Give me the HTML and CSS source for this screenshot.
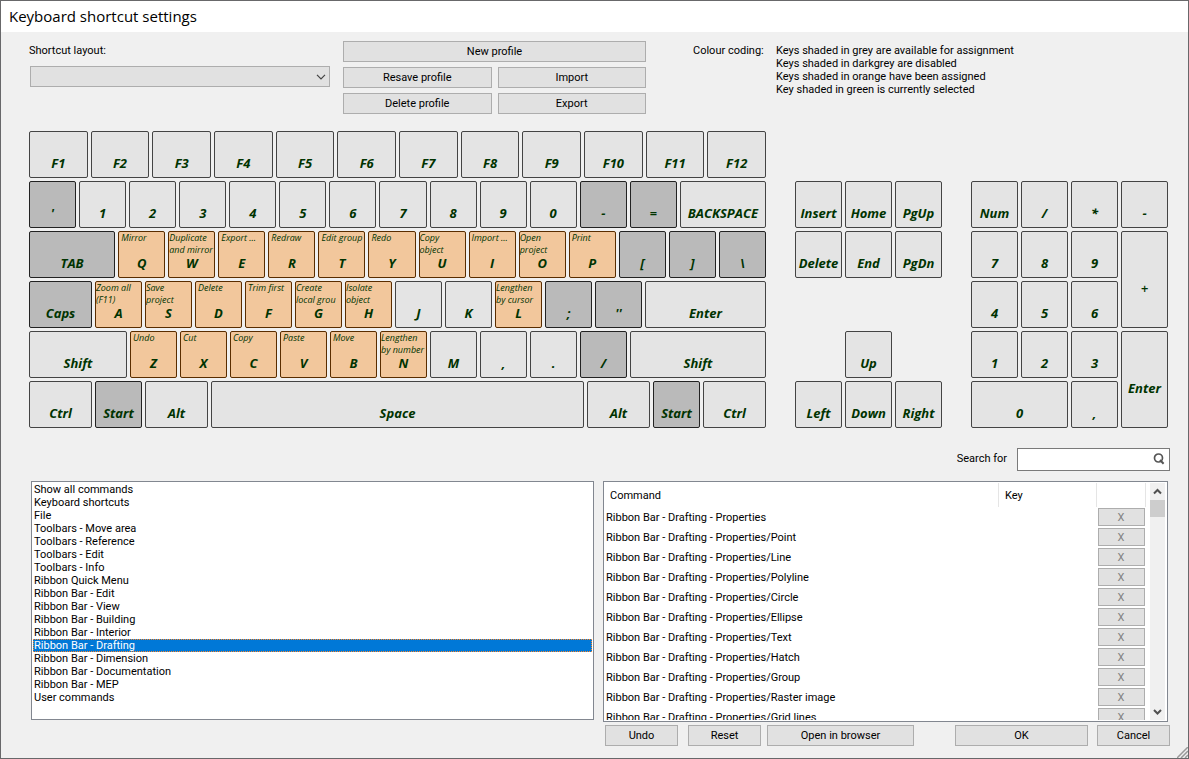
FILE: index.html
```html
<!DOCTYPE html>
<html lang="en">
<head>
  <meta charset="UTF-8">
  <meta name="viewport" content="width=device-width, initial-scale=1.0">
  <title>Keyboard shortcut settings</title>
  <link rel="stylesheet" href="styles.css">
</head>
<body>
  <div class="window">
    <h1 class="title">Keyboard shortcut settings</h1>
    <div class="content">

      <div class="top">
        <div class="layout">
          <label for="layout">Shortcut layout:</label>
          <div class="combo">
            <select id="layout"><option></option></select>
            <svg width="10" height="6" viewBox="0 0 10 6"><path d="M1 .8l4 4 4-4" fill="none" stroke="#444" stroke-width="1.2"/></svg>
          </div>
        </div>
        <div class="profile">
          <button class="btn wide">New profile</button>
          <button class="btn">Resave profile</button>
          <button class="btn">Import</button>
          <button class="btn">Delete profile</button>
          <button class="btn">Export</button>
        </div>
        <div class="legend">
          <span class="legend-title">Colour coding:</span>
          <ul>
            <li>Keys shaded in grey are available for assignment</li>
            <li>Keys shaded in darkgrey are disabled</li>
            <li>Keys shaded in orange have been assigned</li>
            <li>Key shaded in green is currently selected</li>
          </ul>
        </div>
      </div>

      <div class="keyboard">
        <div class="main-keys">
          <div class="row">
            <button class="key">F1</button>
            <button class="key">F2</button>
            <button class="key">F3</button>
            <button class="key">F4</button>
            <button class="key">F5</button>
            <button class="key">F6</button>
            <button class="key">F7</button>
            <button class="key">F8</button>
            <button class="key">F9</button>
            <button class="key">F10</button>
            <button class="key">F11</button>
            <button class="key">F12</button>
          </div>
          <div class="row">
            <button class="key off">'</button>
            <button class="key">1</button>
            <button class="key">2</button>
            <button class="key">3</button>
            <button class="key">4</button>
            <button class="key">5</button>
            <button class="key">6</button>
            <button class="key">7</button>
            <button class="key">8</button>
            <button class="key">9</button>
            <button class="key">0</button>
            <button class="key off">-</button>
            <button class="key off thin">=</button>
            <button class="key w86">BACKSPACE</button>
          </div>
          <div class="row">
            <button class="key off w86">TAB</button>
            <button class="key set"><small>Mirror</small>Q</button>
            <button class="key set"><small class="two">Duplicate<br>and mirror</small>W</button>
            <button class="key set"><small>Export ...</small>E</button>
            <button class="key set"><small>Redraw</small>R</button>
            <button class="key set"><small>Edit group</small>T</button>
            <button class="key set"><small>Redo</small>Y</button>
            <button class="key set"><small class="two">Copy<br>object</small>U</button>
            <button class="key set"><small>Import ...</small>I</button>
            <button class="key set"><small class="two">Open<br>project</small>O</button>
            <button class="key set"><small>Print</small>P</button>
            <button class="key off">[</button>
            <button class="key off">]</button>
            <button class="key off">\</button>
          </div>
          <div class="row">
            <button class="key off w63">Caps</button>
            <button class="key set"><small class="two">Zoom all<br>(F11)</small>A</button>
            <button class="key set"><small class="two">Save<br>project</small>S</button>
            <button class="key set"><small>Delete</small>D</button>
            <button class="key set"><small>Trim first</small>F</button>
            <button class="key set"><small class="two">Create<br>local grou</small>G</button>
            <button class="key set"><small class="two">Isolate<br>object</small>H</button>
            <button class="key">J</button>
            <button class="key">K</button>
            <button class="key set"><small class="two">Lengthen<br>by cursor</small>L</button>
            <button class="key off">;</button>
            <button class="key off">''</button>
            <button class="key w121">Enter</button>
          </div>
          <div class="row">
            <button class="key w98">Shift</button>
            <button class="key set"><small>Undo</small>Z</button>
            <button class="key set"><small>Cut</small>X</button>
            <button class="key set"><small>Copy</small>C</button>
            <button class="key set"><small>Paste</small>V</button>
            <button class="key set"><small>Move</small>B</button>
            <button class="key set"><small class="two">Lengthen<br>by number</small>N</button>
            <button class="key">M</button>
            <button class="key">,</button>
            <button class="key">.</button>
            <button class="key off">/</button>
            <button class="key w136">Shift</button>
          </div>
          <div class="row">
            <button class="key w63">Ctrl</button>
            <button class="key off">Start</button>
            <button class="key w63">Alt</button>
            <button class="key space">Space</button>
            <button class="key w63">Alt</button>
            <button class="key off">Start</button>
            <button class="key w63">Ctrl</button>
          </div>
        </div>

        <div class="nav-keys">
          <button class="key">Insert</button>
          <button class="key">Home</button>
          <button class="key">PgUp</button>
          <button class="key">Delete</button>
          <button class="key">End</button>
          <button class="key">PgDn</button>
          <button class="key up">Up</button>
          <button class="key left">Left</button>
          <button class="key down">Down</button>
          <button class="key right-arrow">Right</button>
        </div>

        <div class="num-keys">
          <button class="key">Num</button>
          <button class="key">/</button>
          <button class="key">*</button>
          <button class="key">-</button>
          <button class="key">7</button>
          <button class="key">8</button>
          <button class="key">9</button>
          <button class="key tall thin">+</button>
          <button class="key">4</button>
          <button class="key">5</button>
          <button class="key">6</button>
          <button class="key">1</button>
          <button class="key">2</button>
          <button class="key">3</button>
          <button class="key tall">Enter</button>
          <button class="key zero">0</button>
          <button class="key">,</button>
        </div>
      </div>

      <div class="search">
        <label for="search">Search for</label>
        <div class="search-box">
          <input id="search" type="text">
          <svg width="12" height="12" viewBox="0 0 12 12"><circle cx="5.5" cy="5" r="4" fill="none" stroke="#555" stroke-width="1.7"/><path d="M7 7l3.6 3.8" stroke="#555" stroke-width="2"/></svg>
        </div>
      </div>

      <div class="bottom">
        <select class="groups" size="18" aria-label="Command groups">
          <option>Show all commands</option>
          <option>Keyboard shortcuts</option>
          <option>File</option>
          <option>Toolbars - Move area</option>
          <option>Toolbars - Reference</option>
          <option>Toolbars - Edit</option>
          <option>Toolbars - Info</option>
          <option>Ribbon Quick Menu</option>
          <option>Ribbon Bar - Edit</option>
          <option>Ribbon Bar - View</option>
          <option>Ribbon Bar - Building</option>
          <option>Ribbon Bar - Interior</option>
          <option selected>Ribbon Bar - Drafting</option>
          <option>Ribbon Bar - Dimension</option>
          <option>Ribbon Bar - Documentation</option>
          <option>Ribbon Bar - MEP</option>
          <option>User commands</option>
        </select>

        <div class="right">
          <div class="commands">
            <div class="table-wrap">
              <table>
                <thead>
                  <tr><th>Command</th><th class="col-key">Key</th><th class="col-del"></th></tr>
                </thead>
                <tbody>
                  <tr><td>Ribbon Bar - Drafting - Properties</td><td></td><td><button class="btn del" disabled>X</button></td></tr>
                  <tr><td>Ribbon Bar - Drafting - Properties/Point</td><td></td><td><button class="btn del" disabled>X</button></td></tr>
                  <tr><td>Ribbon Bar - Drafting - Properties/Line</td><td></td><td><button class="btn del" disabled>X</button></td></tr>
                  <tr><td>Ribbon Bar - Drafting - Properties/Polyline</td><td></td><td><button class="btn del" disabled>X</button></td></tr>
                  <tr><td>Ribbon Bar - Drafting - Properties/Circle</td><td></td><td><button class="btn del" disabled>X</button></td></tr>
                  <tr><td>Ribbon Bar - Drafting - Properties/Ellipse</td><td></td><td><button class="btn del" disabled>X</button></td></tr>
                  <tr><td>Ribbon Bar - Drafting - Properties/Text</td><td></td><td><button class="btn del" disabled>X</button></td></tr>
                  <tr><td>Ribbon Bar - Drafting - Properties/Hatch</td><td></td><td><button class="btn del" disabled>X</button></td></tr>
                  <tr><td>Ribbon Bar - Drafting - Properties/Group</td><td></td><td><button class="btn del" disabled>X</button></td></tr>
                  <tr><td>Ribbon Bar - Drafting - Properties/Raster image</td><td></td><td><button class="btn del" disabled>X</button></td></tr>
                  <tr><td>Ribbon Bar - Drafting - Properties/Grid lines</td><td></td><td><button class="btn del" disabled>X</button></td></tr>
                </tbody>
              </table>
            </div>
            <div class="scrollbar">
              <svg width="15" height="17" viewBox="0 0 15 17"><path d="M4 10.5l3.5-3.5 3.5 3.5" fill="none" stroke="#505050" stroke-width="2"/></svg>
              <div class="thumb"></div>
              <svg width="15" height="17" viewBox="0 0 15 17"><path d="M4 7l3.5 3.5L11 7" fill="none" stroke="#505050" stroke-width="2"/></svg>
            </div>
          </div>
          <div class="actions">
            <button class="btn">Undo</button>
            <button class="btn reset">Reset</button>
            <button class="btn browser">Open in browser</button>
            <button class="btn ok">OK</button>
            <button class="btn">Cancel</button>
          </div>
        </div>
      </div>
    </div>
    <svg class="grip" width="11" height="11" viewBox="0 0 11 11"><path d="M0 11L11 0M4 11l7-7M8 11l3-3" stroke="#999" stroke-width="1.5"/></svg>
  </div>
</body>
</html>
```
FILE: styles.css
```css
*{
  box-sizing: border-box;
  margin: 0;
  padding: 0;
}
body{
  font-family: Roboto, "Liberation Sans", sans-serif;
  font-size: 11px;
  line-height: 13px;
  color: #000;
}
ul{
  list-style: none;
}
button, input, select{
  font: inherit;
  color: inherit;
}
.window{
  position: relative;
  min-height: 100vh;
  background: #f0f0f0;
  border: 1px solid #68686a;
}
.title{
  height: 31px;
  padding-left: 8px;
  background: #fff;
  font-family: "Open Sans", "Noto Sans", sans-serif;
  font-size: 15px;
  font-weight: normal;
  line-height: 31px;
}
.content{
  padding: 9px 18px 12px 28px;
}
.btn{
  height: 21px;
  background: #e1e1e1;
  border: 1px solid #adadad;
  text-align: center;
}

/* profile bar */
.top{
  display: grid;
  grid-template-columns: 301fr 303fr 509fr;
  column-gap: 13px;
  padding-right: 2px;
}
.layout{
  padding-top: 3px;
}
.combo{
  position: relative;
  margin: 9px 0 0 1px;
}
.combo select{
  display: block;
  width: 100%;
  height: 21px;
  appearance: none;
  background: #e1e1e1;
  border: 1px solid #adadad;
  border-radius: 0;
}
.combo svg{
  position: absolute;
  top: 8px;
  right: 4px;
  pointer-events: none;
}
.profile{
  display: grid;
  grid-template-columns: 1fr 1fr;
  gap: 5px 6px;
}
.wide{
  grid-column: span 2;
}
.legend{
  display: flex;
  gap: 14px;
  padding: 3px 0 0 34px;
}
.legend-title{
  width: 69px;
  white-space: nowrap;
}

/* keyboard */
.keyboard{
  display: flex;
  gap: 29px;
  align-items: flex-end;
  margin-top: 17px;
  padding-right: 2px;
}
.main-keys{
  display: flex;
  flex: 737 1 0;
  flex-direction: column;
  gap: 3px;
}
.row{
  display: flex;
  gap: 3px;
}
.nav-keys, .num-keys{
  display: grid;
  grid-auto-rows: 47px;
  gap: 3px;
}
.nav-keys{
  flex: 147 1 0;
  grid-template-columns: repeat(3, 1fr);
  grid-template-rows: repeat(5, 47px);
}
.num-keys{
  flex: 197 1 0;
  grid-template-columns: repeat(4, 1fr);
}
.key{
  position: relative;
  flex: 47 1 47px;
  min-width: 0;
  height: 47px;
  padding-top: 16px;
  background: #e4e4e4;
  border: 1px solid #444;
  border-radius: 2px;
  overflow: hidden;
  color: #003300;
  font-family: "Open Sans", "Noto Sans", sans-serif;
  font-size: 13px;
  font-style: italic;
  font-weight: bold;
  line-height: 16px;
  white-space: nowrap;
}
.key.thin{
  font-weight: 600;
}
.off{
  background: #bababa;
  border-color: #222;
}
.set{
  background: #f2c79c;
  border-color: #5a2d00;
}
.key small{
  position: absolute;
  top: 0;
  left: 2px;
  font-size: 9px;
  font-weight: normal;
  line-height: 12px;
  text-align: left;
}
.key .two{
  left: 0;
}
.w63{
  flex: 63 1 63px;
}
.w86{
  flex: 86 1 86px;
}
.w98{
  flex: 98 1 98px;
}
.w121{
  flex: 121 1 121px;
}
.w136{
  flex: 136 1 136px;
}
.space{
  flex: 373 1 373px;
}
.up{
  grid-area: 4 / 2;
}
.left{
  grid-area: 5 / 1;
}
.down{
  grid-area: 5 / 2;
}
.right-arrow{
  grid-area: 5 / 3;
}
.tall{
  grid-row: span 2;
  height: auto;
}
.zero{
  grid-column: span 2;
}

/* search */
.search{
  display: flex;
  justify-content: flex-end;
  gap: 10px;
  margin-top: 20px;
  line-height: 21px;
}
.search-box{
  position: relative;
  width: 153px;
}
.search-box input{
  display: block;
  width: 100%;
  height: 23px;
  padding: 0 20px 0 4px;
  background: #fff;
  border: 1px solid #7a7a7a;
}
.search-box svg{
  position: absolute;
  top: 5px;
  right: 5px;
}

/* lists */
.bottom{
  display: grid;
  grid-template-columns: 565fr 567fr;
  column-gap: 9px;
  margin-top: 10px;
}
.groups{
  height: 239px;
  margin-left: 2px;
  padding: 1px;
  background: #fff;
  border: 1px solid #828790;
  border-radius: 0;
  overflow: hidden;
}
.groups option{
  min-height: 13px;
  padding: 0 1px;
}
.groups option:checked{
  background: #0078d7 linear-gradient(#0078d7, #0078d7);
  color: #fff;
  -webkit-text-fill-color: #fff;
  outline: 1px dotted #ff8728;
  outline-offset: -1px;
}
.commands{
  display: flex;
  gap: 4px;
  height: 241px;
  margin-right: 2px;
  padding: 1px 2px 1px 0;
  background: #fff;
  border: 1px solid #828790;
}
.table-wrap{
  flex: 1;
  overflow: hidden;
}
table{
  width: 100%;
  border-collapse: collapse;
  table-layout: fixed;
}
th{
  height: 24px;
  padding-left: 6px;
  border-right: 1px solid #e5e5e5;
  font-weight: normal;
  text-align: left;
}
.col-key{
  width: 98px;
}
.col-del{
  width: 49px;
}
td{
  height: 20px;
  padding-left: 2px;
  white-space: nowrap;
}
.del{
  display: block;
  width: 47px;
  height: 18px;
  margin-left: -1px;
  color: #838383;
}
.scrollbar{
  display: flex;
  flex-direction: column;
  width: 15px;
  background: #f0f0f0;
}
.scrollbar svg{
  flex: none;
}
.thumb{
  height: 17px;
  margin-bottom: auto;
  background: #cdcdcd;
}
.actions{
  display: flex;
  margin-top: 3px;
  padding-left: 2px;
}
.actions .btn{
  width: 73px;
}
.actions .reset{
  margin: 0 6px 0 10px;
}
.actions .browser{
  width: 147px;
}
.actions .ok{
  width: 133px;
  margin: 0 9px 0 auto;
}
.grip{
  position: absolute;
  right: 0;
  bottom: 0;
}
```
